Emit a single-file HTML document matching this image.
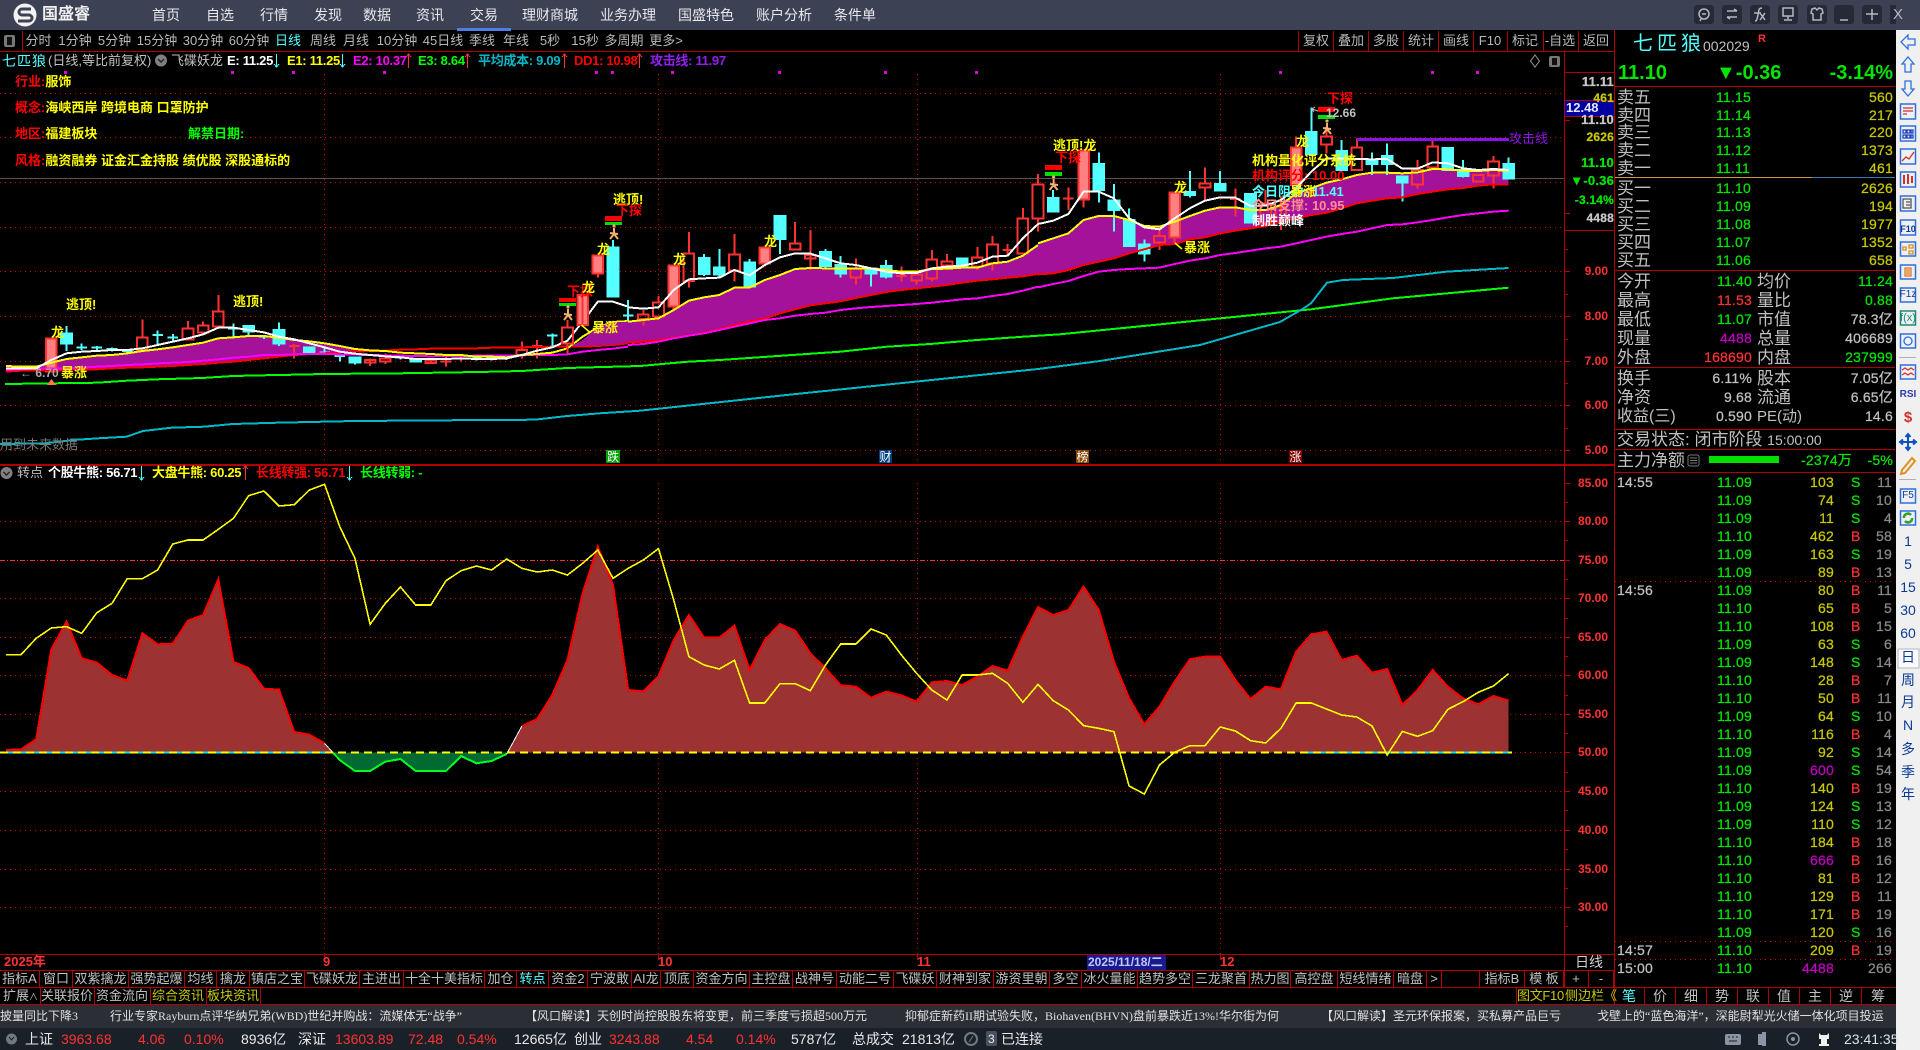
<!DOCTYPE html>
<html><head><meta charset="utf-8"><title>国盛睿</title>
<style>
*{box-sizing:border-box}
html,body{margin:0;padding:0;width:1920px;height:1050px;overflow:hidden;background:#000}
body{font:13px "Liberation Sans","WenQuanYi Zen Hei","Noto Sans CJK SC",sans-serif;color:#c0c0c0;position:relative}
.a{position:absolute;white-space:nowrap;line-height:16px;height:16px}
.bl{position:absolute;background:#b00000}
svg.ch{position:absolute;left:0;top:0}
svg.ch *{vector-effect:non-scaling-stroke}
.b{font-weight:bold}
.lg{letter-spacing:-.3px}
.tabs{position:absolute;display:flex;left:0;height:18px}
.tabs span{display:block;height:100%;border-right:1px solid #b00000;text-align:center;line-height:17px;white-space:nowrap;overflow:hidden;font-size:13px;color:#c0c0c0}
.menu{position:absolute;top:7px;font-size:14px;line-height:16px;color:#e8e8ec;transform:translateX(-50%);white-space:nowrap}
.tb{position:absolute;top:33px;font-size:13px;line-height:16px;color:#b8b8b8;transform:translateX(-50%);white-space:nowrap}
.ax{position:absolute;right:312px;font-size:12px;line-height:14px;font-weight:bold;color:#ff3232}
.l{position:absolute;left:1617px;font-size:17px;line-height:18px;margin-top:1px;color:#c0c0c0;white-space:nowrap}
.l2{position:absolute;left:1757px;font-size:17px;line-height:18px;margin-top:1px;color:#c0c0c0;white-space:nowrap}
.p{position:absolute;font-size:14px;line-height:18px;letter-spacing:.2px;white-space:nowrap;-webkit-text-stroke:.25px currentColor}
.t{position:absolute;left:1615px;width:280px;height:18px;line-height:18px;font-size:14px;letter-spacing:.2px;-webkit-text-stroke:.25px currentColor}
.t i,.t b,.t u,.t s,.t em{position:absolute;font-style:normal;font-weight:normal;text-decoration:none;top:0}
.t i{left:2px;color:#c0c0c0}
.t b{right:143px;color:#00e600}
.t u{right:61px;color:#c8c800}
.t s{left:236px;color:#00e600;font-size:14px}
.t s.r{color:#ff3232}
.t u.v{color:#c000c0}
.t em{right:3px;color:#8a8a8a}
.g{color:#00e600}.r{color:#ff3232}.y{color:#c8c800}.w{color:#c0c0c0}.m{color:#c000c0}
.sb{position:absolute;left:1896px;width:24px;text-align:center;color:#0a3a96;font-size:14px;line-height:18px}
.an{position:absolute;white-space:nowrap;font-weight:bold;font-size:13px;line-height:14px;height:14px}
.st{position:absolute;top:1031px;font-size:14px;line-height:16px;white-space:nowrap;color:#e8e8e8}
.st.r{color:#ff3232}
.nw{position:absolute;top:1009px;font-size:12px;line-height:15px;white-space:nowrap;color:#e0e0e0;font-family:"Liberation Serif","WenQuanYi Zen Hei","Noto Sans CJK SC",serif}
</style></head><body>

<!-- title bar -->
<div style="position:absolute;left:0;top:0;width:1920px;height:30px;background:#3c4254"></div>
<div style="position:absolute;left:457px;top:28px;width:54px;height:3px;background:#4d7fe6"></div>
<svg style="position:absolute;left:12px;top:2px" width="28" height="26" viewBox="0 0 28 26"><circle cx="13" cy="13" r="11.5" fill="#f2f2f2"/><path d="M19 7H10a3 3 0 0 0 0 6h7a3 3 0 0 1 0 6H6" fill="none" stroke="#3c4254" stroke-width="3"/></svg>
<div class="a b" style="left:42px;top:6px;font-size:16px;line-height:18px;height:18px;color:#f0f0f0">国盛睿</div>
<span class="menu" style="left:166px">首页</span><span class="menu" style="left:220px">自选</span><span class="menu" style="left:274px">行情</span><span class="menu" style="left:328px">发现</span><span class="menu" style="left:377px">数据</span><span class="menu" style="left:430px">资讯</span><span class="menu" style="left:484px">交易</span><span class="menu" style="left:550px">理财商城</span><span class="menu" style="left:628px">业务办理</span><span class="menu" style="left:706px">国盛特色</span><span class="menu" style="left:784px">账户分析</span><span class="menu" style="left:855px">条件单</span>
<svg style="position:absolute;left:1690px;top:0" width="206" height="30" viewBox="0 0 206 30">
<g fill="#262a36"><rect x="4" y="5" width="20" height="19" rx="3"/><rect x="32" y="5" width="20" height="19" rx="3"/><rect x="60" y="5" width="20" height="19" rx="3"/><rect x="88" y="5" width="20" height="19" rx="3"/><rect x="117" y="5" width="20" height="19" rx="3"/><rect x="144" y="5" width="20" height="19" rx="3"/><rect x="172" y="5" width="20" height="19" rx="3"/><rect x="200" y="5" width="6" height="19"/></g>
<g fill="none" stroke="#b4b8c2" stroke-width="1.5"><circle cx="14" cy="14" r="5"/><path d="M11 19l-1 2M12 14h4"/><path d="M37 11h10M44 9l3 2M37 17h10M40 19l-3-2"/><path d="M72 8c-4 0-3 3-4 7s-1 6-3 6M64 13h7M70 13l5 7M75 13l-5 7"/><rect x="93" y="8" width="10" height="8"/><path d="M98 16v3M94 20h8"/><path d="M122 9l3-1 2 2 2-2 3 1 1 4-2 1v6h-8v-6l-2-1z"/><path d="M150 20h8"/><path d="M182 9v5M176 14h12M182 14v6" stroke-width="1.5"/></g>
</svg>
<div class="a" style="left:1893px;top:7px;color:#b4b8c2;font-size:15px">X</div>

<!-- chart svg -->
<svg class="ch" width="1920" height="1050" viewBox="0 0 1920 1050" shape-rendering="crispEdges">
<!-- grids -->
<g fill="none" stroke="#d00000" stroke-width="1" stroke-dasharray="1 4">
<path d="M0 93.5H1564M0 137.5H1564M0 182.5H1564M0 227.5H1564M0 271.5H1564M0 316.5H1564M0 361.5H1564M0 405.5H1564M0 450.5H1564"/>
<path d="M324.5 74V464M658.5 74V464M917.5 74V464M1220.5 74V464"/>
<path d="M324.5 483V954M658.5 483V954M917.5 483V954M1220.5 483V954"/>
<path d="M0 521.5H1564M0 598.5H1564M0 637.5H1564M0 675.5H1564M0 714.5H1564M0 752.5H1564M0 791.5H1564M0 830.5H1564M0 869.5H1564M0 907.5H1564"/>
<path d="M1615 581.5H1895M1615 941.5H1895M1615 959.5H1895"/>
</g>
<path d="M0 560.5H1564" fill="none" stroke="#ff3232" stroke-dasharray="5 2 1 2"/>
<path d="M0 178.5H1564" stroke="#555"/>
<!-- magenta ticks -->
<g fill="#e000e0"><rect x="64" y="71" width="3" height="3"/><rect x="231" y="71" width="3" height="3"/><rect x="292" y="71" width="3" height="3"/><rect x="383" y="71" width="3" height="3"/><rect x="595" y="71" width="3" height="3"/><rect x="611" y="71" width="3" height="3"/><rect x="671" y="71" width="3" height="3"/><rect x="778" y="71" width="3" height="3"/><rect x="884" y="71" width="3" height="3"/><rect x="975" y="71" width="3" height="3"/><rect x="1279" y="71" width="3" height="3"/><rect x="1431" y="71" width="3" height="3"/><rect x="1476" y="71" width="3" height="3"/></g>

<!-- group 6: bars 0-41 -->
<g transform="translate(5.8,240) scale(15.18,.33333)">
<polygon fill="#a4129a" points="0,378 1,380 2,380 3,368 4,357 5,352 6,347 7,345 8,340 9,333 10,328 11,322 12,315 13,308 14,295 15,292 16,288 17,288 18,293 19,300 20,304 21,310 22,318 23,327 24,331 25,332 24,333 23,335 22,337 21,340 20,342 19,345 18,350 17,355 16,360 15,365 14,368 13,372 12,375 11,378 10,380 9,382 8,383 7,385 6,388 5,388 4,390 3,392 2,392 1,392 0,395"/>
<path fill="none" stroke="#ff3232" stroke-width="2" d="M9 238V293M9 330V335M8.65 293H9.35V330H8.65ZM12 243V266M12 298V300M11.65 266H12.35V298H11.65ZM13 245V256M13 278V280M12.65 256H13.35V278H12.65ZM14 165V214M14 260V262M13.65 214H14.35V260H13.65ZM19 312V355M18.65 318H19.35M24 355V378M23.65 360H24.35V368H23.65ZM25 340V355M25 365V372M24.65 355H25.35V365H24.65ZM28 358V372M27.65 362H28.35V369H27.65ZM29 350V380M28.65 365H29.35M30 345V365M29.65 355H30.35M34 304V330M34 345V355M33.65 330H34.35V345H33.65ZM35 300V355M34.65 318H35.35"/>
<path fill="#ff8080" stroke="#ff3232" stroke-width="2" d="M2.65 295H3.35V395H2.65Z"/>
<path fill="#54ffff" stroke="#54ffff" stroke-width="2" d="M4 258V333M3.65 280H4.35V310H3.65ZM5 310V330M4.65 322H5.35M6 318V330M5.65 323H6.35M7 322V335M6.65 327H7.35M8 328V338M7.65 333H8.35M10 272V318M9.65 285H10.35M11 282V305M10.65 292H11.35M15 250V290M14.65 265H15.35M16 255V288M15.65 258H16.35V275H15.65ZM17 285V297M16.65 290H17.35M18 247V318M17.65 270H18.35V310H17.65ZM19.65 322H20.35V338H19.65ZM21 322V342M20.65 337H21.35M22 342V365M21.65 348H22.35M23 350V374M22.65 352H23.35V368H22.65ZM26 350V358M25.65 352H26.35M27 358V368M26.65 362H27.35V365H26.65ZM31 352V362M30.65 355H31.35M32 352V362M31.65 355H32.35M33 350V360M32.65 353H33.35"/>
<g fill="none" stroke-width="2">
<polyline stroke="#ff0000" points="0,395 1,392 2,392 3,392 4,390 5,388 6,388 7,385 8,383 9,382 10,380 11,378 12,375 13,372 14,368 15,365 16,360 17,355 18,350 19,345 20,342 21,340 22,337 23,335 24,333 25,332 26,329 27,328 28,326 29,325 30,325 31,325 32,323 33,323 34,322 35,321 36,320 37,320 38,320 39,318 40,315 41,310"/>
<polyline stroke="#ff00ff" points="0,390 1,388 2,385 3,385 4,385 5,383 6,380 7,378 8,375 9,373 10,370 11,368 12,366 13,362 14,358 15,353 16,350 17,345 18,345 19,343 20,342 21,342 22,343 23,344 24,345 25,346 26,347 27,348 28,349 29,348 30,348 31,347 32,347 33,347 34,346 35,345 36,345 37,343 38,335 39,330 40,326 41,320"/>
<polyline stroke="#ffff00" points="0,378 1,380 2,380 3,368 4,357 5,352 6,347 7,345 8,340 9,333 10,328 11,322 12,315 13,308 14,295 15,292 16,288 17,288 18,293 19,300 20,304 21,310 22,318 23,327 24,331 25,333 26,338 27,340 28,342 29,345 30,345 31,350 32,350 33,352 34,345 35,342 36,338 37,325 38,290 39,262 40,246 41,243"/>
<polyline stroke="#ffffff" points="0,385 1,385 2,385 3,360 4,340 5,335 6,333 7,330 8,330 9,325 10,315 11,305 12,295 13,283 14,263 15,263 16,270 17,277 18,290 19,298 20,310 21,322 22,335 23,341 24,345 25,349 26,352 27,357 28,357 29,357 30,355 31,357 32,357 33,355 34,345 35,332 36,322 37,302 38,245 39,185 40,185 41,200"/>
</g>
</g>

<!-- group 8: bars 36-69 -->
<g transform="translate(5.8,170) scale(15.18,.33333)">
<polygon fill="#a4129a" points="37.2,530 38,510 39,470 40,457 41,455 42,450 43,445 44,420 45,392 46,382 47,375 48,353 49,353 50,330 51,315 52,297 53,294 54,295 55,296 56,295 57,295 58,300 59,305 60,305 61,297 62,296 63,293 64,293 65,280 66,275 67,257 68,225 68,312 67,319 66,323 65,328 64,332 63,338 62,345 61,350 60,355 59,360 58,366 57,375 56,384 55,394 54,400 53,406 52,418 51,430 50,445 49,455 48,465 47,478 46,488 45,496 44,503 43,511 42,515 41,518 40,524 39,526 38,528"/>
<path fill="none" stroke="#ff3232" stroke-width="2" d="M37 450V472M37 520V550M36.65 472H37.35V520H36.65ZM42 420V433M42 447V467M41.65 433H42.35V447H41.65ZM43 378V398M43 440V442M42.65 398H43.35V440H42.65ZM45 186V250M45 333V352M44.65 250H45.35V333H44.65ZM48 192V253M48 302V335M47.65 253H48.35V302H47.65ZM52 156V220M52 238V242M51.65 220H52.35V238H51.65ZM53 180V300M52.65 255H53.35V265H52.65ZM56 265V295M56 322V344M55.65 295H56.35V322H55.65ZM59 289V335M58.65 318H59.35M60 308V314M60 331V344M59.65 314H60.35V331H59.65ZM61 240V268M61 326V335M60.65 268H61.35V326H60.65ZM62 252V274M62 287V300M61.65 274H62.35V287H61.65ZM64 231V262M64 290V300M63.65 262H64.35V290H63.65ZM65 198V223M65 280V302M64.65 223H65.35V280H64.65ZM66 222V260M65.65 240H66.35M67 114V145M67 250V252M66.65 145H67.35V250H66.65ZM68 12V43M68 146V185M67.65 43H68.35V146H67.65Z"/>
<path fill="#ff8080" stroke="#ff3232" stroke-width="2" d="M38 365V470M39 310V323M44 410V418M50 280V290M37.65 375H38.35V465H37.65ZM38.65 256H39.35V310H38.65ZM43.65 286H44.35V410H43.65ZM49.65 232H50.35V280H49.65Z"/>
<path fill="#54ffff" stroke="#54ffff" stroke-width="2" d="M36 490V530M35.65 497H36.35M40 210V232M39.65 232H40.35V380H39.65ZM41 390V452M40.65 437H41.35M46 252V318M45.65 264H46.35V312H45.65ZM47 237V322M46.65 292H47.35V313H46.65ZM49 267V350M48.65 277H49.35V350H48.65ZM51 207V252M50.65 138H51.35V207H50.65ZM54 237V296M53.65 246H54.35V288H53.65ZM55 258V323M54.65 285H55.35V311H54.65ZM57 295V350M56.65 295H57.35V311H56.65ZM58 270V326M57.65 288H58.35V320H57.65ZM62.65 265H63.35V290H62.65Z"/>
<g fill="none" stroke-width="2">
<polyline stroke="#ff0000" points="41,518 42,515 43,511 44,503 45,496 46,488 47,478 48,465 49,455 50,445 51,430 52,418 53,406 54,400 55,394 56,384 57,375 58,366 59,360 60,355 61,350 62,345 63,338 64,332 65,328 66,323 67,319 68,312"/>
<polyline stroke="#ff00ff" points="41,525 42,522 43,515 44,505 45,497 46,490 47,480 48,470 49,460 50,450 51,445 52,437 53,432 54,428 55,420 56,415 57,411 58,408 59,405 60,402 61,398 62,393 63,388 64,385 65,378 66,372 67,362 68,350"/>
<polyline stroke="#ffff00" points="41,455 42,450 43,445 44,420 45,392 46,382 47,375 48,353 49,353 50,330 51,315 52,297 53,294 54,295 55,296 56,295 57,295 58,300 59,305 60,305 61,297 62,296 63,293 64,293 65,280 66,275 67,257 68,225"/>
<polyline stroke="#ffffff" points="41,412 42,416 43,412 44,360 45,328 46,325 47,323 48,300 49,316 50,285 51,262 52,250 53,251 54,265 55,280 56,285 57,295 58,305 59,310 60,309 61,295 62,290 63,287 64,278 65,260 66,257 67,205 68,162"/>
</g>
</g>

<!-- group 7: bars 68-99 -->
<g transform="translate(5.8,90) scale(15.18,.33333)">
<polygon fill="#a4129a" points="68,460 69,445 70,430 71,390 72,378 73,378 74,390 75,408 76,410 77,395 78,378 79,362 80,352 81,352 82,360 83,360 84,345 85,310 86,295 87,278 88,268 89,255 90,248 91,248 92,250 93,247 94,237 95,238 96,242 97,243 98,240 99,243 99,283 98,283 97,287 96,294 95,298 94,305 93,312 92,322 91,325 90,332 89,340 88,355 87,368 86,375 85,385 84,395 83,408 82,415 81,422 80,430 79,442 78,448 77,462 76,465 75,478 74,490 73,505 72,515 71,525 70,540 69,550 68,553"/>
<path fill="none" stroke="#ff3232" stroke-width="2" d="M70 292V360M69.65 326H70.35M76 415V438M76 458V480M75.65 438H76.35V458H75.65ZM79 232V280M79 293V330M78.65 280H79.35V293H78.65ZM81 295V380M80.65 327H81.35M83 300V340M83 400V410M82.65 340H83.35V400H82.65ZM84 320V420M83.65 350H84.35V395H83.65ZM87 110V140M87 163V190M86.65 140H87.35V163H86.65ZM89 145V172M88.65 172H89.35V240H88.65ZM93 210V240M93 283V295M92.65 240H93.35V283H92.65ZM94 152V170M94 232V235M93.65 170H94.35V232H93.65ZM96.65 255H97.35V275H96.65ZM98 198V215M98 257V295M97.65 215H98.35V257H97.65Z"/>
<path fill="#ff8080" stroke="#ff3232" stroke-width="2" d="M71 328V352M77 442V462M85 140V172M70.65 182H71.35V328H70.65ZM76.65 307H77.35V442H76.65ZM84.65 172H85.35V285H84.65Z"/>
<path fill="#54ffff" stroke="#54ffff" stroke-width="2" d="M69 300V324M68.65 324H69.35V365H68.65ZM72 187V222M72 300V338M71.65 222H72.35V300H71.65ZM73 282V425M72.65 332H73.35V360H72.65ZM74 355V390M73.65 390H74.35V468H73.65ZM75 448V515M74.65 464H75.35V490H74.65ZM78 243V322M77.65 306H78.35V315H77.65ZM80 243V303M79.65 282H80.35V302H79.65ZM81.65 312H82.35V398H81.65ZM86 52V126M85.65 126H86.35V192H85.65ZM88 150V183M87.65 183H88.35V240H87.65ZM90 187V255M89.65 210H90.35V222H89.65ZM91 160V255M90.65 198H91.35V222H90.65ZM92 278V335M91.65 260H92.35V278H91.65ZM94.65 174H95.35V240H94.65ZM96 210V262M95.65 240H96.35V258H95.65ZM99 203V265M98.65 222H99.35V265H98.65Z"/>
<g fill="none" stroke-width="2">
<polyline stroke="#ff0000" points="68,553 69,550 70,540 71,525 72,515 73,505 74,490 75,478 76,465 77,462 78,448 79,442 80,430 81,422 82,415 83,408 84,395 85,385 86,375 87,368 88,355 89,340 90,332 91,325 92,322 93,312 94,305 95,298 96,294 97,287 98,283 99,283"/>
<polyline stroke="#ff00ff" points="68,592 69,582 70,573 71,558 72,545 73,540 74,537 75,535 76,533 77,522 78,512 79,505 80,495 81,489 82,482 83,475 84,470 85,460 86,450 87,440 88,432 89,425 90,415 91,405 92,403 93,397 94,390 95,382 96,375 97,370 98,365 99,362"/>
<polyline stroke="#ffff00" points="68,460 69,445 70,430 71,390 72,378 73,378 74,390 75,408 76,410 77,395 78,378 79,362 80,352 81,352 82,360 83,360 84,345 85,310 86,295 87,278 88,268 89,255 90,248 91,248 92,250 93,247 94,237 95,238 96,242 97,243 98,240 99,243"/>
<polyline stroke="#ffffff" points="68,402 69,392 70,372 71,305 72,305 73,325 74,385 75,412 76,418 77,385 78,355 79,332 80,322 81,323 82,348 83,347 84,330 85,295 86,245 87,205 88,205 89,207 90,208 91,207 92,236 93,236 94,217 95,220 96,235 97,240 98,237 99,240"/>
</g>
</g>

<!-- green & teal -->
<g fill="none" stroke-width="2">
<polyline stroke="#00ff00" points="5,384 97,382.7 127,380.7 157.5,379.3 202,378 233,376 263,375.3 294,374.7 324.5,374 400,373.3 478,372 522,371 567,368 640,366 688,361.7 720,360 840,351.7 887,346.7 930,344 977,340 1023,336.7 1060,334.3 1311,309.3 1393,298.3 1508.6,287.7"/>
<polyline stroke="#00b8c8" points="0,444 45,443.3 73.5,440 98,438.3 126.5,436.7 143,431 171.4,427.7 204,426.7 232.7,424 277.6,422.7 355,421 445,420.3 534.7,419.7 567.3,416 600,413.3 640,410.7 796,394 1038,369 1100,361 1200,345 1280,322 1302,309.3 1311,303.3 1327,282.7 1343,280 1393,278 1446,271.7 1508.6,268"/>
</g>
<path d="M1357 139.5H1509" stroke="#8a14e6" stroke-width="3"/>

<!-- lower chart -->
<g transform="translate(5.8,460) scale(15.18,.33333)">
<polygon fill="#9c3232" points="0,877 0,870 1,868 2,838 3,568 4,485 5,595 6,608 7,645 8,662 9,520 10,553 11,551 12,482 13,465 14,358 15,606 16,624 17,686 18,689 19,816 20,824 21,850 21.53,877"/>
<polygon fill="#006a32" points="21.53,877 22,900 23,933 24,933 25,905 26,897 27,933 28,933 29,933 30,888 31,910 32,903 33,882 33.06,877"/>
<polygon fill="#9c3232" points="33.06,877 34,798 35,777 36,705 37,600 38,400 39,260 40,375 41,690 42,694 43,648 44,540 45,465 46,533 47,533 48,497 49,630 50,540 51,492 52,512 53,580 54,625 55,676 56,680 57,713 58,695 59,706 60,725 61,667 62,663 63,675 64,650 65,618 66,632 67,530 68,441 69,465 70,450 71,380 72,450 73,605 74,715 75,793 76,740 77,665 78,598 79,590 80,590 81,660 82,717 83,680 84,688 85,575 86,523 87,515 88,600 89,587 90,638 91,627 92,735 93,690 94,630 95,680 96,715 97,733 98,708 99,722 99,877"/>
<g fill="none">
<polyline stroke="#ff0000" stroke-width="2" points="0,870 1,868 2,838 3,568 4,485 5,595 6,608 7,645 8,662 9,520 10,553 11,551 12,482 13,465 14,358 15,606 16,624 17,686 18,689 19,816 20,824 21,850"/>
<polyline stroke="#ffffff" stroke-width="1" points="21,850 21.53,877"/>
<polyline stroke="#00ff20" stroke-width="2" points="21.53,877 22,900 23,933 24,933 25,905 26,897 27,933 28,933 29,933 30,888 31,910 32,903 33,882"/>
<polyline stroke="#ffffff" stroke-width="1" points="33,882 34,798"/>
<polyline stroke="#ff0000" stroke-width="2" points="34,798 35,777 36,705 37,600 38,400 39,260 40,375 41,690 42,694 43,648 44,540 45,465 46,533 47,533 48,497 49,630 50,540 51,492 52,512 53,580 54,625 55,676 56,680 57,713 58,695 59,706 60,725 61,667 62,663 63,675 64,650 65,618 66,632 67,530 68,441 69,465 70,450 71,380 72,450 73,605 74,715 75,793 76,740 77,665 78,598 79,590 80,590 81,660 82,717 83,680 84,688 85,575 86,523 87,515 88,600 89,587 90,638 91,627 92,735 93,690 94,630 95,680 96,715 97,733 98,708 99,722"/>
</g>
</g>
<path d="M0 752.5H330M1300 752.5H1512" stroke="#00e8f0" stroke-width="2" fill="none"/>
<path d="M0 752.5H1512" stroke="#ffff00" stroke-width="2" fill="none" stroke-dasharray="8 5"/>
<g transform="translate(5.8,460) scale(15.18,.33333)">
<polyline fill="none" stroke="#ffff00" stroke-width="1.6" points="0,584 1,584 2,535 3,504 4,500 5,520 6,458 7,430 8,356 9,356 10,330 11,252 12,240 13,240 14,208 15,175 16,107 17,93 18,138 19,134 20,90 21,73 22,200 23,295 24,493 25,430 26,381 27,435 28,435 29,362 30,332 31,318 32,330 33,297 34,325 35,336 36,330 37,345 38,310 39,270 40,355 41,325 42,300 43,266 44,420 45,590 46,615 47,627 48,601 49,729 50,729 51,671 52,671 53,692 54,615 55,552 56,552 57,507 58,525 59,585 60,640 61,690 62,720 63,645 64,645 65,640 66,670 67,727 68,673 69,722 70,750 71,797 72,805 73,815 74,978 75,1002 76,915 77,877 78,857 79,857 80,801 81,813 82,842 83,849 84,805 85,729 86,729 87,747 88,765 89,771 90,798 91,885 92,814 93,829 94,812 95,748 96,725 97,697 98,678 99,641"/>
</g>

<!-- frame lines -->
<g fill="none" stroke="#b00000" stroke-width="1">
<path d="M0 51.5H1614M22.5 31V51M1298.5 31V51M1333.5 31V51M1368.5 31V51M1403.5 31V51M1438.5 31V51M1473.5 31V51M1507.5 31V51M1543.5 31V51M1578.5 31V51"/>
<path d="M1614.5 30V1005M1564.5 51V987"/>
<path d="M0 464.5H1614M0 465.5H1614M0 954.5H1614M0 970.5H1614M0 987.5H1896M0 1004.5H1896"/>
<path d="M1564 72.5H1614M1564 230.5H1614M1564 100.5H1614M1564 116.5H1614"/>
<path d="M1615 86.5H1895M1615 270.5H1895M1615 367.5H1895M1615 429.5H1895M1615 449.5H1895M1615 472.5H1895"/>
<path d="M1644.5 988V1004M1675.5 988V1004M1706.5 988V1004M1737.5 988V1004M1768.5 988V1004M1799.5 988V1004M1830.5 988V1004M1861.5 988V1004M40.5 988V1004M94.5 988V1004M150.5 988V1004M206.5 988V1004M260.5 988V1004M1516.5 988V1004"/>
<path d="M1564 271.5H1570M1564 316.5H1570M1564 361.5H1570M1564 405.5H1570M1564 450.5H1570M1564 294.5H1568M1564 339.5H1568M1564 383.5H1568M1564 428.5H1568M1564 249.5H1568M1564 120.5H1570M1564 213.5H1570"/>
<path d="M1564 483.5H1570M1564 521.5H1570M1564 560.5H1570M1564 598.5H1570M1564 637.5H1570M1564 675.5H1570M1564 714.5H1570M1564 752.5H1570M1564 791.5H1570M1564 830.5H1570M1564 869.5H1570M1564 907.5H1570M1564 502.5H1568M1564 540.5H1568M1564 579.5H1568M1564 618.5H1568M1564 656.5H1568M1564 695.5H1568M1564 733.5H1568M1564 772.5H1568M1564 810.5H1568M1564 849.5H1568M1564 888.5H1568M1564 926.5H1568"/>
<path d="M324.5 954V960M658.5 954V960M917.5 954V960M1220.5 954V960"/>
</g>
<path d="M1615 177.5H1812" stroke="#c89a3c"/><path d="M1812 177.5H1895" stroke="#3a78b0"/>

<!-- legend arrows -->
<g fill="none" stroke-width="1">
<path d="M276.5 54V67M274 64l2.5 3 2.5-3M342.5 54V67M340 64l2.5 3 2.5-3" stroke="#54ffff"/>
<path d="M408.5 54V68M406 57l2.5-3 2.5 3M467.5 54V68M465 57l2.5-3 2.5 3M564.5 54V68M562 57l2.5-3 2.5 3M639.5 54V68M637 57l2.5-3 2.5 3" stroke="#ff3232"/>
<path d="M141.5 466V480M139 477l2.5 3 2.5-3M349.5 466V480M347 477l2.5 3 2.5-3" stroke="#54ffff"/>
<path d="M245.5 466V480M243 469l2.5-3 2.5 3" stroke="#ff3232"/>
</g>
<!-- misc icons in chart -->
<g shape-rendering="auto">
<circle cx="161" cy="60.5" r="6" fill="#808080"/><path d="M158 59l3 3 3-3" stroke="#222" fill="none" stroke-width="1.4"/>
<circle cx="6.5" cy="473" r="6" fill="#808080"/><path d="M3.5 472l3 3 3-3" stroke="#222" fill="none" stroke-width="1.4"/>
<path d="M1535 55l4.5 6-4.5 6-4.5-6z" fill="none" stroke="#999"/>
<rect x="1549" y="56" width="11" height="11" rx="2" fill="#777"/><rect x="1552" y="58" width="5" height="7" fill="#111"/>
<rect x="4" y="35" width="11" height="12" rx="2" fill="#777"/><rect x="7" y="37" width="5" height="8" fill="#111"/>
<path d="M51.5 379l4.5 6h-9z" fill="#ff7a3c"/>
<g fill="#ff0000"><rect x="559" y="298" width="17" height="4"/><rect x="605" y="216" width="17" height="5"/><rect x="1045" y="165" width="17" height="5"/><rect x="1318" y="107" width="17" height="5"/></g>
<g fill="#00e000"><rect x="559" y="303" width="17" height="3"/><rect x="605" y="222" width="17" height="3"/><rect x="1045" y="172" width="17" height="4"/><rect x="1318" y="115" width="17" height="4"/></g>
<g fill="none" stroke="#f0b070" stroke-width="2">
<path d="M568 309v6l-4 5M568 315l4 5M564 314l8 1"/><path d="M614 228v6l-4 5M614 234l4 5M610 233l8 1"/><path d="M1053.6 179v6l-4 5M1053.6 185l4 5M1050 184l8 1"/><path d="M1327 123v6l-4 5M1327 129l4 5M1323 128l8 1"/>
</g>
<g fill="#f0b070"><circle cx="568" cy="307" r="1.6"/><circle cx="614" cy="226" r="1.6"/><circle cx="1053.6" cy="177" r="1.6"/><circle cx="1327" cy="121" r="1.6"/></g>
<path d="M581.5 325l8 7M1175 243l7 6" stroke="#ffff00" stroke-width="1.5" fill="none"/>
<path d="M1312 109l6 2M1312 109l3-2M1312 109l2 3" stroke="#c0c0c0" fill="none"/>
</g>
<g fill="#00a000"><rect x="606" y="450" width="14" height="13"/></g><rect x="879" y="450" width="13" height="13" fill="#004080"/><rect x="1076" y="450" width="13" height="13" fill="#8b4500"/><rect x="1289" y="450" width="13" height="13" fill="#800000"/>
<rect x="1087" y="955" width="79" height="15" fill="#1a1a8c"/>
<rect x="1565" y="101" width="49" height="15" fill="#0000a0"/>
<rect x="1709" y="456" width="70" height="7" fill="#00e000"/>
<rect x="1688" y="455" width="11" height="11" rx="2" fill="none" stroke="#777"/><path d="M1690 458h7M1690 460.500h7M1690 463h7" stroke="#777"/>
<!-- bottom -->
<rect x="0" y="1005" width="1896" height="23" fill="#2b2e35"/>
<rect x="0" y="1028" width="1896" height="22" fill="#1a2028"/>
<!-- sidebar -->
<rect x="1896" y="30" width="24" height="1020" fill="#f0f0f0"/>
<path d="M1899 357.500H1916M1899 479.500H1916" stroke="#b0b0b0"/>
<rect x="1898" y="649" width="21" height="19" fill="#fafafa" stroke="#b8b8b8"/>
<g shape-rendering="auto" fill="none" stroke="#2e6fe0" stroke-width="1.3">
<path d="M1901 42l7-7v4h7v6h-7v4z"/><path d="M1908 57l6 7h-3v8h-6v-8h-3z"/><path d="M1908 96l6-7h-3v-8h-6v8h-3z"/>
<g stroke-width="1.5"><rect x="1900.500" y="104" width="15" height="15"/><rect x="1900.500" y="126" width="15" height="15"/><rect x="1900.500" y="149" width="15" height="15"/><rect x="1900.500" y="172" width="15" height="15"/><rect x="1900.500" y="196" width="15" height="15"/><rect x="1900.500" y="220" width="15" height="15"/><rect x="1900.500" y="242" width="15" height="14"/><rect x="1900.500" y="265" width="15" height="14"/><rect x="1900.500" y="288" width="15" height="14"/><rect x="1900.500" y="311" width="15" height="14" stroke="#1a8a7a"/><rect x="1900.500" y="334" width="15" height="14"/><rect x="1900.500" y="365" width="15" height="14"/><rect x="1900.500" y="489" width="15" height="14"/><rect x="1900.500" y="511" width="15" height="14"/></g>
<path d="M1903 108h10M1903 111h10M1903 114h4" stroke="#d03030"/><path d="M1903 130h3v3h-3zM1907 130h3v3h-3zM1911 130h2v3h-2zM1903 135h3v3h-3zM1907 135h3v3h-3zM1911 135h2v3h-2z" stroke="#2040c0"/>
<path d="M1902 161l4-4 3 2 5-7" stroke="#d03030"/><path d="M1904 175v9M1908 174v10M1912 176v7" stroke="#d03030" stroke-width="2"/><path d="M1903 199h8v9h-8zM1906 202h4M1906 205h4" stroke="#555"/>
<path d="M1903 247h3v3h-3zM1909 245h4v3h-4zM1909 251h4v3h-4z" stroke="#d89020"/><path d="M1905 268h6v8h-6zM1906 270h4M1906 272h4M1906 274h4" stroke="#e07820"/>
<circle cx="1908" cy="341" r="4"/><path d="M1902 370l3-2 3 2 3-2 3 2M1902 375l3-2 3 2 3-2 3 2" stroke="#d03030"/>
<path d="M1908 434v16M1905.500 437l2.500-3 2.500 3M1905.500 447l2.500 3 2.500-3M1900 442h16M1903 439.500l-3 2.500 3 2.500M1913 439.500l3 2.500-3 2.500" stroke="#1050c0" stroke-width="2"/>
<path d="M1902 470l10-12 3 3-10 12-4 1z" stroke="#e09020" stroke-width="2"/>
<path d="M1904 518a4 4 0 0 1 7-3M1912 518a4 4 0 0 1-7 3" stroke="#30a030" stroke-width="2.500"/>
</g>
<!-- status icons -->
<g shape-rendering="auto">
<circle cx="11.500" cy="1039" r="5.500" fill="#707880"/><path d="M9 1037l2.500 3 2.500-3" stroke="#222" fill="none"/>
<circle cx="971" cy="1039" r="6" fill="none" stroke="#707880" stroke-width="2"/><path d="M969 1042l4-6" stroke="#707880"/>
<rect x="986" y="1031" width="11" height="15" rx="2" fill="#4a5060"/>
<rect x="1725" y="1034" width="16" height="11" rx="2" fill="#8a94a4"/><path d="M1728 1037h2M1732 1037h2M1736 1037h2M1729 1041h8" stroke="#1a2028"/>
<path d="M1760 1034v11M1764 1032v14" stroke="#8a94a4" stroke-width="4"/>
<circle cx="1793" cy="1039" r="6" fill="none" stroke="#8a94a4" stroke-width="1.500"/><circle cx="1793" cy="1039" r="2" fill="#8a94a4"/>
<path d="M1819 1033l2 2h6l2-2v6h-2v5h2v2h-10v-2h2v-5h-2z" fill="#f0f0f0"/>
</g>
</svg>

<!-- toolbar -->
<span class="tb" style="left:38.5px">分时</span><span class="tb" style="left:75px">1分钟</span><span class="tb" style="left:114.5px">5分钟</span><span class="tb" style="left:157px">15分钟</span><span class="tb" style="left:203px">30分钟</span><span class="tb" style="left:249px">60分钟</span><span class="tb" style="left:288px;color:#54ffff">日线</span><span class="tb" style="left:323px">周线</span><span class="tb" style="left:356px">月线</span><span class="tb" style="left:397px">10分钟</span><span class="tb" style="left:443px">45日线</span><span class="tb" style="left:482px">季线</span><span class="tb" style="left:516px">年线</span><span class="tb" style="left:550px">5秒</span><span class="tb" style="left:585px">15秒</span><span class="tb" style="left:624px">多周期</span><span class="tb" style="left:666px">更多&gt;</span>
<span class="tb" style="left:1316px">复权</span><span class="tb" style="left:1351px">叠加</span><span class="tb" style="left:1386px">多股</span><span class="tb" style="left:1421px">统计</span><span class="tb" style="left:1456px">画线</span><span class="tb" style="left:1490px">F10</span><span class="tb" style="left:1525px">标记</span><span class="tb" style="left:1560px">-自选</span><span class="tb" style="left:1596px">返回</span>

<!-- legend -->
<div class="a" style="left:2px;top:53px;color:#54ffff;font-size:14px;letter-spacing:1px">七匹狼</div>
<div class="a" style="left:48px;top:53px;color:#c0c0c0">(日线,等比前复权)</div>
<div class="a" style="left:171px;top:53px;color:#c0c0c0">飞碟妖龙</div>
<div class="a b lg" style="left:227px;top:53px;color:#fff">E: 11.25</div>
<div class="a b lg" style="left:287px;top:53px;color:#ffff00">E1: 11.25</div>
<div class="a b lg" style="left:353px;top:53px;color:#ff00ff">E2: 10.37</div>
<div class="a b lg" style="left:418px;top:53px;color:#00ff00">E3: 8.64</div>
<div class="a b lg" style="left:478px;top:53px;color:#00b8c8">平均成本: 9.09</div>
<div class="a b lg" style="left:574px;top:53px;color:#ff0000">DD1: 10.98</div>
<div class="a b lg" style="left:650px;top:53px;color:#9020f0">攻击线: 11.97</div>

<div class="a b" style="left:15px;top:74px;color:#ff0000">行业:<span style="color:#ffff00">服饰</span></div>
<div class="a b" style="left:15px;top:100px;color:#ff0000">概念:<span style="color:#ffff00">海峡西岸 跨境电商 口罩防护</span></div>
<div class="a b" style="left:15px;top:126px;color:#ff0000">地区:<span style="color:#ffff00">福建板块</span></div>
<div class="a b" style="left:188px;top:126px;color:#00ff00">解禁日期:</div>
<div class="a b" style="left:15px;top:153px;color:#ff0000">风格:<span style="color:#ffff00">融资融券 证金汇金持股 绩优股 深股通标的</span></div>

<!-- chart annotations -->
<div class="an" style="left:66px;top:298px;color:#ffff00">逃顶!</div>
<div class="an" style="left:233px;top:295px;color:#ffff00">逃顶!</div>
<div class="an" style="left:51px;top:326px;color:#ffff00">龙</div>
<div class="an" style="left:20px;top:366px;color:#aaa;font-size:12px">← 6.70</div>
<div class="an" style="left:61px;top:366px;color:#ffff00">暴涨</div>
<div class="an" style="left:567px;top:285px;color:#ff0000">下探</div>
<div class="an" style="left:582px;top:281px;color:#ffff00">龙</div>
<div class="an" style="left:597px;top:243px;color:#ffff00">龙</div>
<div class="an" style="left:592px;top:321px;color:#ffff00">暴涨</div>
<div class="an" style="left:613px;top:193px;color:#ffff00">逃顶!</div>
<div class="an" style="left:616px;top:204px;color:#ff0000">下探</div>
<div class="an" style="left:673px;top:253px;color:#ffff00">龙</div>
<div class="an" style="left:764px;top:235px;color:#ffff00">龙</div>
<div class="an" style="left:1053px;top:139px;color:#ffff00">逃顶!龙</div>
<div class="an" style="left:1055px;top:151px;color:#ff0000">下探</div>
<div class="an" style="left:1174px;top:181px;color:#ffff00">龙</div>
<div class="an" style="left:1184px;top:241px;color:#ffff00">暴涨</div>
<div class="an" style="left:1296px;top:135px;color:#ffff00">龙</div>
<div class="an" style="left:1327px;top:92px;color:#ff0000">下探</div>
<div class="an" style="left:1326px;top:106px;color:#c0c0c0;font-size:12px">12.66</div>
<div class="an" style="left:1509px;top:132px;color:#8a14e6;font-weight:normal;font-size:13px">攻击线</div>
<div class="an" style="left:1252px;top:154px;color:#ffff00">机构量化评分系统</div>
<div class="an" style="left:1252px;top:169px;color:#ff0000">机构评分: 10.00</div>
<div class="an" style="left:1252px;top:185px;color:#54ffff">今日阻力: 11.41</div>
<div class="an" style="left:1290px;top:185px;color:#ffff00">暴涨</div>
<div class="an" style="left:1252px;top:199px;color:#ff9090">今日支撑: 10.95</div>
<div class="an" style="left:1252px;top:214px;color:#ffffff">制胜巅峰</div>
<div class="a" style="left:0;top:437px;color:#777;font-size:13px">用到未来数据</div>
<div class="a" style="left:606px;top:449px;width:14px;text-align:center;color:#fff;font-size:12px">跌</div>
<div class="a" style="left:879px;top:449px;width:13px;text-align:center;color:#fff;font-size:12px">财</div>
<div class="a" style="left:1076px;top:449px;width:13px;text-align:center;color:#fff;font-size:12px">榜</div>
<div class="a" style="left:1289px;top:449px;width:13px;text-align:center;color:#fff;font-size:12px">涨</div>

<!-- lower legend -->
<div class="a" style="left:17px;top:465px;color:#c0c0c0">转点</div>
<div class="a b lg" style="left:48px;top:465px;color:#fff">个股牛熊: 56.71</div>
<div class="a b lg" style="left:152px;top:465px;color:#ffff00">大盘牛熊: 60.25</div>
<div class="a b lg" style="left:256px;top:465px;color:#ff0000">长线转强: 56.71</div>
<div class="a b lg" style="left:360px;top:465px;color:#00ff00">长线转弱: -</div>

<!-- axis upper -->
<div class="p" style="right:306px;top:73px;color:#c8c8c8;font-size:13px;font-weight:bold">11.11</div>
<div class="p" style="right:306px;top:89px;color:#c8c800;font-size:12px;font-weight:bold">461</div>
<div class="a b" style="left:1566px;top:100px;color:#e8e8ff;font-size:13px">12.48</div>
<div class="p" style="right:306px;top:111px;color:#c8c8c8;font-size:13px;font-weight:bold">11.10</div>
<div class="p" style="right:306px;top:128px;color:#c8c800;font-size:12px;font-weight:bold">2626</div>
<div class="p" style="right:306px;top:154px;color:#00e600;font-size:13px;font-weight:bold">11.10</div>
<div class="p" style="right:306px;top:172px;color:#00e600;font-size:13px;font-weight:bold">▼-0.36</div>
<div class="p" style="right:306px;top:191px;color:#00e600;font-size:12px;font-weight:bold">-3.14%</div>
<div class="p" style="right:306px;top:209px;color:#c8c8c8;font-size:12px;font-weight:bold">4488</div>
<div class="ax" style="top:264px">9.00</div><div class="ax" style="top:309px">8.00</div><div class="ax" style="top:354px">7.00</div><div class="ax" style="top:398px">6.00</div><div class="ax" style="top:443px">5.00</div>
<div class="ax" style="top:476px">85.00</div><div class="ax" style="top:514px">80.00</div><div class="ax" style="top:553px">75.00</div><div class="ax" style="top:591px">70.00</div><div class="ax" style="top:630px">65.00</div><div class="ax" style="top:668px">60.00</div><div class="ax" style="top:707px">55.00</div><div class="ax" style="top:745px">50.00</div><div class="ax" style="top:784px">45.00</div><div class="ax" style="top:823px">40.00</div><div class="ax" style="top:862px">35.00</div><div class="ax" style="top:900px">30.00</div>

<!-- date axis -->
<div class="a b" style="left:4px;top:954px;color:#ff3232">2025年</div>
<div class="a b" style="left:323px;top:954px;color:#ff3232">9</div>
<div class="a b" style="left:658px;top:954px;color:#ff3232">10</div>
<div class="a b" style="left:917px;top:954px;color:#ff3232">11</div>
<div class="a b" style="left:1088px;top:954px;color:#c0c8ff;font-size:12px">2025/11/18/二</div>
<div class="a b" style="left:1220px;top:954px;color:#ff3232">12</div>
<div class="a" style="left:1564px;width:50px;text-align:center;top:954px;color:#d0d0d0;font-size:14px">日线</div>

<!-- tabs -->
<div class="tabs" style="top:970px;height:17px">
<span style="width:40px">指标A</span><span style="width:33px">窗口</span><span style="width:56px">双紫擒龙</span><span style="width:56px">强势起爆</span><span style="width:32px">均线</span><span style="width:33px">擒龙</span><span style="width:55px">镇店之宝</span><span style="width:55px">飞碟妖龙</span><span style="width:44px">主进出</span><span style="width:81px">十全十美指标</span><span style="width:32px">加仓</span><span style="width:32px;color:#54ffff">转点</span><span style="width:39px">资金2</span><span style="width:44px">宁波敢</span><span style="width:29px">AI龙</span><span style="width:33px">顶底</span><span style="width:56px">资金方向</span><span style="width:43px">主控盘</span><span style="width:44px">战神号</span><span style="width:57px">动能二号</span><span style="width:43px">飞碟妖</span><span style="width:57px">财神到家</span><span style="width:56px">游资里朝</span><span style="width:32px">多空</span><span style="width:56px">冰火量能</span><span style="width:55px">趋势多空</span><span style="width:57px">三龙聚首</span><span style="width:41px">热力图</span><span style="width:47px">高控盘</span><span style="width:56px">短线情绪</span><span style="width:33px">暗盘</span><span style="width:15px">&gt;</span><span style="width:38px"></span><span style="width:45px">指标B</span><span style="width:39px">模 板</span><span style="width:25px">+</span><span style="width:25px">-</span>
</div>
<div class="a" style="left:3px;top:988px;color:#c0c0c0">扩展<span style="font-size:9px">∧</span></div>
<div class="a" style="left:40px;top:988px;width:54px;text-align:center;color:#c0c0c0">关联报价</div>
<div class="a" style="left:94px;top:988px;width:56px;text-align:center;color:#c0c0c0">资金流向</div>
<div class="a" style="left:150px;top:988px;width:56px;text-align:center;color:#c8c800">综合资讯</div>
<div class="a" style="left:206px;top:988px;width:54px;text-align:center;color:#c8c800">板块资讯</div>
<div class="a" style="left:1517px;top:988px;color:#c8c800;letter-spacing:-.3px">图文F10</div>
<div class="a" style="left:1565px;top:988px;color:#c8c800">侧边栏《</div>
<div class="a" style="left:1622px;top:988px;color:#54ffff;font-size:14px">笔</div><div class="a" style="left:1653px;top:988px;font-size:14px">价</div><div class="a" style="left:1684px;top:988px;font-size:14px">细</div><div class="a" style="left:1715px;top:988px;font-size:14px">势</div><div class="a" style="left:1746px;top:988px;font-size:14px">联</div><div class="a" style="left:1777px;top:988px;font-size:14px">值</div><div class="a" style="left:1808px;top:988px;font-size:14px">主</div><div class="a" style="left:1839px;top:988px;font-size:14px">逆</div><div class="a" style="left:1871px;top:988px;font-size:14px">筹</div>

<!-- news -->
<div style="position:absolute;left:0;top:1005px;width:1896px;height:23px;overflow:hidden">
<span class="nw" style="left:0;top:4px">披量同比下降3</span>
<span class="nw" style="left:110px;top:4px">行业专家Rayburn点评华纳兄弟(WBD)世纪并购战：流媒体无“战争”</span>
<span class="nw" style="left:525px;top:4px">【风口解读】天创时尚控股股东将变更，前三季度亏损超500万元</span>
<span class="nw" style="left:905px;top:4px">抑郁症新药II期试验失败，Biohaven(BHVN)盘前暴跌近13%!华尔街为何</span>
<span class="nw" style="left:1321px;top:4px">【风口解读】圣元环保报案，买私募产品巨亏</span>
<span class="nw" style="left:1597px;top:4px">戈壁上的“蓝色海洋”，深能尉犁光火储一体化项目投运</span>
</div>

<!-- status -->
<span class="st" style="left:25px">上证</span><span class="st r" style="left:61px">3963.68</span><span class="st r" style="left:138px">4.06</span><span class="st r" style="left:184px">0.10%</span><span class="st" style="left:241px">8936亿</span><span class="st" style="left:298px">深证</span><span class="st r" style="left:335px">13603.89</span><span class="st r" style="left:408px">72.48</span><span class="st r" style="left:457px">0.54%</span><span class="st" style="left:514px">12665亿</span><span class="st" style="left:574px">创业</span><span class="st r" style="left:609px">3243.88</span><span class="st r" style="left:686px">4.54</span><span class="st r" style="left:736px">0.14%</span><span class="st" style="left:791px">5787亿</span><span class="st" style="left:852px">总成交</span><span class="st" style="left:902px">21813亿</span>
<span class="st" style="left:988px;font-size:12px">3</span><span class="st" style="left:1001px">已连接</span><span class="st" style="left:1844px;font-size:14px;color:#d8e0e8">23:41:35</span>

<!-- right panel -->
<div class="a" style="left:1633px;top:33px;height:22px;line-height:22px;color:#54ffff;font-size:20px;letter-spacing:4px">七匹狼</div>
<div class="a" style="left:1703px;top:38px;color:#c0c0c0;font-size:14px">002029</div>
<div class="a b" style="left:1758px;top:31px;color:#ff3232;font-size:11px">R</div>
<div class="a b" style="left:1618px;top:62px;height:22px;line-height:22px;color:#00e600;font-size:20px">11.10</div>
<div class="a b" style="left:1716px;top:62px;height:22px;line-height:22px;color:#00e600;font-size:20px">▼-0.36</div>
<div class="a b" style="right:27px;top:62px;height:22px;line-height:22px;color:#00e600;font-size:20px">-3.14%</div>

<div class="l" style="top:88px">卖五</div><div class="p g" style="left:1716px;top:88px">11.15</div><div class="p y" style="right:27px;top:88px">560</div>
<div class="l" style="top:106px">卖四</div><div class="p g" style="left:1716px;top:106px">11.14</div><div class="p y" style="right:27px;top:106px">217</div>
<div class="l" style="top:123px">卖三</div><div class="p g" style="left:1716px;top:123px">11.13</div><div class="p y" style="right:27px;top:123px">220</div>
<div class="l" style="top:141px">卖二</div><div class="p g" style="left:1716px;top:141px">11.12</div><div class="p y" style="right:27px;top:141px">1373</div>
<div class="l" style="top:159px">卖一</div><div class="p g" style="left:1716px;top:159px">11.11</div><div class="p y" style="right:27px;top:159px">461</div>
<div class="l" style="top:179px">买一</div><div class="p g" style="left:1716px;top:179px">11.10</div><div class="p y" style="right:27px;top:179px">2626</div>
<div class="l" style="top:197px">买二</div><div class="p g" style="left:1716px;top:197px">11.09</div><div class="p y" style="right:27px;top:197px">194</div>
<div class="l" style="top:215px">买三</div><div class="p g" style="left:1716px;top:215px">11.08</div><div class="p y" style="right:27px;top:215px">1977</div>
<div class="l" style="top:233px">买四</div><div class="p g" style="left:1716px;top:233px">11.07</div><div class="p y" style="right:27px;top:233px">1352</div>
<div class="l" style="top:251px">买五</div><div class="p g" style="left:1716px;top:251px">11.06</div><div class="p y" style="right:27px;top:251px">658</div>

<div class="l" style="top:272px">今开</div><div class="p g" style="right:168px;top:272px">11.40</div><div class="l2" style="top:272px">均价</div><div class="p g" style="right:27px;top:272px">11.24</div>
<div class="l" style="top:291px">最高</div><div class="p r" style="right:168px;top:291px">11.53</div><div class="l2" style="top:291px">量比</div><div class="p g" style="right:27px;top:291px">0.88</div>
<div class="l" style="top:310px">最低</div><div class="p g" style="right:168px;top:310px">11.07</div><div class="l2" style="top:310px">市值</div><div class="p w" style="right:27px;top:310px">78.3亿</div>
<div class="l" style="top:329px">现量</div><div class="p m" style="right:168px;top:329px">4488</div><div class="l2" style="top:329px">总量</div><div class="p w" style="right:27px;top:329px">406689</div>
<div class="l" style="top:348px">外盘</div><div class="p r" style="right:168px;top:348px">168690</div><div class="l2" style="top:348px">内盘</div><div class="p g" style="right:27px;top:348px">237999</div>

<div class="l" style="top:369px">换手</div><div class="p w" style="right:168px;top:369px">6.11%</div><div class="l2" style="top:369px">股本</div><div class="p w" style="right:27px;top:369px">7.05亿</div>
<div class="l" style="top:388px">净资</div><div class="p w" style="right:168px;top:388px">9.68</div><div class="l2" style="top:388px">流通</div><div class="p w" style="right:27px;top:388px">6.65亿</div>
<div class="l" style="top:407px;font-size:16px">收益(三)</div><div class="p w" style="right:168px;top:407px">0.590</div><div class="l2" style="top:407px;font-size:15px">PE(动)</div><div class="p w" style="right:27px;top:407px">14.6</div>

<div class="l" style="top:430px">交易状态: 闭市阶段 <span style="font-size:14px">15:00:00</span></div>
<div class="l" style="top:451px">主力净额</div>
<div class="p g" style="left:1801px;top:451px">-2374万</div><div class="p g" style="right:27px;top:451px">-5%</div>

<!-- ticks -->
<div class="t" style="top:473px"><i>14:55</i><b>11.09</b><u>103</u><s>S</s><em>11</em></div>
<div class="t" style="top:491px"><b>11.09</b><u>74</u><s>S</s><em>10</em></div>
<div class="t" style="top:509px"><b>11.09</b><u>11</u><s>S</s><em>4</em></div>
<div class="t" style="top:527px"><b>11.10</b><u>462</u><s class="r">B</s><em>58</em></div>
<div class="t" style="top:545px"><b>11.09</b><u>163</u><s>S</s><em>19</em></div>
<div class="t" style="top:563px"><b>11.09</b><u>89</u><s class="r">B</s><em>13</em></div>
<div class="t" style="top:581px"><i>14:56</i><b>11.09</b><u>80</u><s class="r">B</s><em>11</em></div>
<div class="t" style="top:599px"><b>11.10</b><u>65</u><s class="r">B</s><em>5</em></div>
<div class="t" style="top:617px"><b>11.10</b><u>108</u><s class="r">B</s><em>15</em></div>
<div class="t" style="top:635px"><b>11.09</b><u>63</u><s>S</s><em>6</em></div>
<div class="t" style="top:653px"><b>11.09</b><u>148</u><s>S</s><em>14</em></div>
<div class="t" style="top:671px"><b>11.10</b><u>28</u><s class="r">B</s><em>7</em></div>
<div class="t" style="top:689px"><b>11.10</b><u>50</u><s class="r">B</s><em>11</em></div>
<div class="t" style="top:707px"><b>11.09</b><u>64</u><s>S</s><em>10</em></div>
<div class="t" style="top:725px"><b>11.10</b><u>116</u><s class="r">B</s><em>4</em></div>
<div class="t" style="top:743px"><b>11.09</b><u>92</u><s>S</s><em>14</em></div>
<div class="t" style="top:761px"><b>11.09</b><u class="v">600</u><s>S</s><em>54</em></div>
<div class="t" style="top:779px"><b>11.10</b><u>140</u><s class="r">B</s><em>19</em></div>
<div class="t" style="top:797px"><b>11.09</b><u>124</u><s>S</s><em>13</em></div>
<div class="t" style="top:815px"><b>11.09</b><u>110</u><s>S</s><em>12</em></div>
<div class="t" style="top:833px"><b>11.10</b><u>184</u><s class="r">B</s><em>18</em></div>
<div class="t" style="top:851px"><b>11.10</b><u class="v">666</u><s class="r">B</s><em>16</em></div>
<div class="t" style="top:869px"><b>11.10</b><u>81</u><s class="r">B</s><em>12</em></div>
<div class="t" style="top:887px"><b>11.10</b><u>129</u><s class="r">B</s><em>11</em></div>
<div class="t" style="top:905px"><b>11.10</b><u>171</u><s class="r">B</s><em>19</em></div>
<div class="t" style="top:923px"><b>11.09</b><u>120</u><s>S</s><em>16</em></div>
<div class="t" style="top:941px"><i>14:57</i><b>11.10</b><u>209</u><s class="r">B</s><em>19</em></div>
<div class="t" style="top:959px"><i>15:00</i><b>11.10</b><u class="v">4488</u><em>266</em></div>

<!-- sidebar text -->
<div class="sb" style="top:220px;font-size:9px;font-weight:bold">F10</div>
<div class="sb" style="top:286px;font-size:10px">F1z</div>
<div class="sb" style="top:309px;font-size:11px;color:#1a8a7a">f(x)</div>
<div class="sb b" style="top:386px;font-size:10px;color:#2a3ab0">RSI</div>
<div class="sb b" style="top:409px;font-size:15px;color:#d03030">$</div>
<div class="sb" style="top:487px;font-size:10px">F5</div>
<div class="sb" style="top:532px">1</div><div class="sb" style="top:555px">5</div><div class="sb" style="top:578px">15</div><div class="sb" style="top:601px">30</div><div class="sb" style="top:624px">60</div><div class="sb" style="top:648px">日</div><div class="sb" style="top:671px">周</div><div class="sb" style="top:693px">月</div><div class="sb" style="top:716px">N</div><div class="sb" style="top:740px">多</div><div class="sb" style="top:763px">季</div><div class="sb" style="top:785px">年</div>
</body></html>
